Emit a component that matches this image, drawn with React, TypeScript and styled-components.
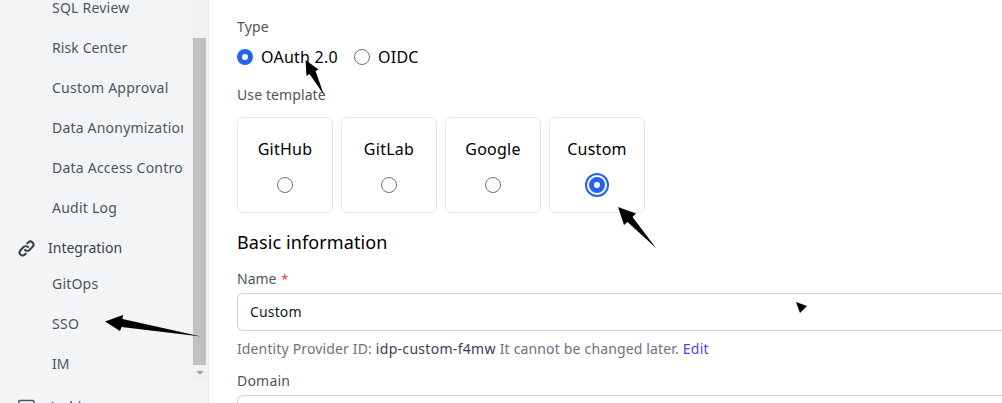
import React from "react";
import styled, { createGlobalStyle } from "styled-components";

const Global = createGlobalStyle`
  * { box-sizing: border-box; }
  body { margin: 0; overflow: hidden; background: #fff; }
  body, input { font-family: "Noto Sans", "Open Sans", sans-serif; }
`;

const Page = styled.div`
  position: relative;
  display: flex;
  width: 1002px;
  height: 403px;
  overflow: hidden;
  color: #000;
`;

const Sidebar = styled.aside`
  display: flex;
  flex: none;
  width: 209px;
  height: 403px;
  background: #f3f4f6;
  border-right: 1px solid #e5e7eb;
`;

const Nav = styled.nav`
  width: 183px;
  margin-right: 8px;
  overflow: hidden;
  margin-top: -12px;
  height: 415px;
`;

const NavItem = styled.div<{ $ls: number }>`
  height: 40px;
  padding-left: 52px;
  line-height: 39px;
  font-size: 14px;
  color: #4b5563;
  white-space: nowrap;
  letter-spacing: ${(p) => p.$ls}px;
`;

const NavGroup = styled.div<{ $height: number; $top: number }>`
  display: flex;
  align-items: flex-start;
  gap: 13px;
  height: ${(p) => p.$height}px;
  padding: ${(p) => p.$top}px 0 0 18px;
  font-size: 14px;
  line-height: 20px;
  color: #374151;
  svg { flex: none; margin-top: 2px; }
`;

const ScrollTrack = styled.div`
  display: flex;
  flex-direction: column;
  align-items: center;
  width: 17px;
  height: 382px;
  padding-top: 38px;
  background: #f1f1f1;
`;

const ScrollThumb = styled.div`
  width: 13px;
  height: 327px;
  background: #c1c1c1;
`;

const ScrollArrow = styled.div`
  margin-top: 6px;
  border: 4px solid transparent;
  border-top-color: #a3a3a3;
  border-bottom: 0;
`;

const Main = styled.main`
  flex: 1;
  min-width: 0;
  padding: 17px 0 0 28px;
`;

const Label = styled.div<{ $ls?: number }>`
  height: 20px;
  font-size: 14px;
  line-height: 20px;
  color: #4b5563;
  letter-spacing: ${(p) => p.$ls ?? 0}px;
`;

const Required = styled.span`
  margin-left: 1px;
  font-family: "Open Sans", sans-serif;
  font-size: 13px;
  color: #dc2626;
`;

const TypeRow = styled.div`
  display: flex;
  align-items: center;
  height: 24px;
  margin: 8px 0 16px;
`;

const TypeOption = styled.label<{ $width: number }>`
  display: flex;
  align-items: center;
  gap: 8px;
  width: ${(p) => p.$width}px;
  font-size: 16px;
  line-height: 24px;
  white-space: nowrap;
  letter-spacing: 0.25px;
`;

const Radio = styled.span<{ $checked?: boolean; $ring?: boolean }>`
  flex: none;
  width: 16px;
  height: 16px;
  border: ${(p) => (p.$checked ? "5px solid #2563eb" : "1px solid #6b7280")};
  border-radius: 50%;
  background: #fff;
  box-shadow: ${(p) => (p.$ring ? "0 0 0 2px #fff, 0 0 0 4px #2563eb" : "none")};
`;

const Cards = styled.div`
  display: flex;
  gap: 8px;
  margin-top: 12px;
`;

const Card = styled.div`
  display: flex;
  flex-direction: column;
  align-items: center;
  gap: 16px;
  width: 96px;
  height: 96px;
  padding-top: 19px;
  border: 1px solid #e5e7eb;
  border-radius: 6px;
  font-size: 16px;
  line-height: 24px;
  letter-spacing: 0.25px;
`;

const Heading = styled.h2`
  height: 28px;
  margin: 15px 0 13px;
  font-size: 18px;
  font-weight: 400;
  line-height: 28px;
  letter-spacing: 0.1px;
`;

const Field = styled.div`
  display: flex;
  align-items: center;
  height: 38px;
  margin-top: 4px;
  padding-left: 12px;
  border: 1px solid #d1d5db;
  border-right: 0;
  border-radius: 6px 0 0 6px;
  font-size: 14px;
  line-height: 20px;
  letter-spacing: 0.15px;
  color: #111827;
`;

const Hint = styled.p`
  height: 20px;
  margin: 8px 0 12px;
  font-size: 14px;
  line-height: 20px;
  letter-spacing: 0.12px;
  word-spacing: 0.2px;
  color: #6b7280;
  white-space: nowrap;
`;

const HintId = styled.span`
  letter-spacing: 0.3px;
  color: #374151;
`;

const HintLink = styled.a`
  letter-spacing: 0.25px;
  color: #4f46e5;
`;

const Annotations = styled.svg`
  position: absolute;
  inset: 0;
  pointer-events: none;
`;

const LinkIcon = () => (
  <svg width="17" height="17" viewBox="1 1 22 22" fill="none" stroke="#374151" strokeWidth="2.7" strokeLinecap="round" strokeLinejoin="round">
    <path d="M13.828 10.172a4 4 0 00-5.656 0l-4 4a4 4 0 105.656 5.656l1.102-1.101m-.758-4.899a4 4 0 005.656 0l4-4a4 4 0 00-5.656-5.656l-1.1 1.1" />
  </svg>
);

const ArchiveIcon = () => (
  <svg width="17" height="17" viewBox="0 0 17 17" fill="none" stroke="#4b5563" strokeWidth="1.5" strokeLinejoin="round">
    <rect x="0.8" y="1.5" width="15.2" height="4" rx="1" />
    <path d="M2 5.5v9h13v-9M6.5 8.5h4" />
  </svg>
);

const reviewItems = [
  { text: "SQL Review", ls: 0.22 },
  { text: "Risk Center", ls: 0.1 },
  { text: "Custom Approval", ls: 0.24 },
  { text: "Data Anonymization", ls: 0.2 },
  { text: "Data Access Control", ls: 0.22 },
  { text: "Audit Log", ls: 0.25 },
];
const integrationItems = [
  { text: "GitOps", ls: 0.2 },
  { text: "SSO", ls: 0.3 },
  { text: "IM", ls: 0 },
];
const templates = ["GitHub", "GitLab", "Google", "Custom"];

export default function App() {
  return (
    <Page>
      <Global />
      <Sidebar>
        <Nav>
          {reviewItems.map((i) => (
            <NavItem key={i.text} $ls={i.ls}>{i.text}</NavItem>
          ))}
          <NavGroup $height={36} $top={10}>
            <LinkIcon />
            Integration
          </NavGroup>
          {integrationItems.map((i) => (
            <NavItem key={i.text} $ls={i.ls}>{i.text}</NavItem>
          ))}
          <NavGroup $height={48} $top={13}>
            <ArchiveIcon />
            Archive
          </NavGroup>
        </Nav>
        <ScrollTrack>
          <ScrollThumb />
          <ScrollArrow />
        </ScrollTrack>
      </Sidebar>
      <Main>
        <Label $ls={0.2}>Type</Label>
        <TypeRow>
          <TypeOption $width={117}>
            <Radio $checked />
            OAuth 2.0
          </TypeOption>
          <TypeOption $width={80}>
            <Radio />
            OIDC
          </TypeOption>
        </TypeRow>
        <Label $ls={0.1}>Use template</Label>
        <Cards>
          {templates.map((t) => (
            <Card key={t}>
              {t}
              <Radio $checked={t === "Custom"} $ring={t === "Custom"} />
            </Card>
          ))}
        </Cards>
        <Heading>Basic information</Heading>
        <Label>
          Name <Required>*</Required>
        </Label>
        <Field>Custom</Field>
        <Hint>
          Identity Provider ID: <HintId>idp-custom-f4mw</HintId> It cannot be changed later. <HintLink>Edit</HintLink>
        </Hint>
        <Label $ls={0.2}>Domain</Label>
        <Field />
      </Main>
      <Annotations width="1002" height="403" viewBox="0 0 1002 403">
        <path d="M305.5 60L318.5 69.5L315.5 71L324 95L309.5 74L306.5 76Z" />
        <path d="M618 207L636 213.5L632.5 217L656 248L627.5 222L624 225Z" />
        <path d="M105 321.5L123 315L122.5 319L201 336.5L121.5 327L120 331Z" />
        <path d="M796 302L807 306L800 313Z" />
      </Annotations>
    </Page>
  );
}
